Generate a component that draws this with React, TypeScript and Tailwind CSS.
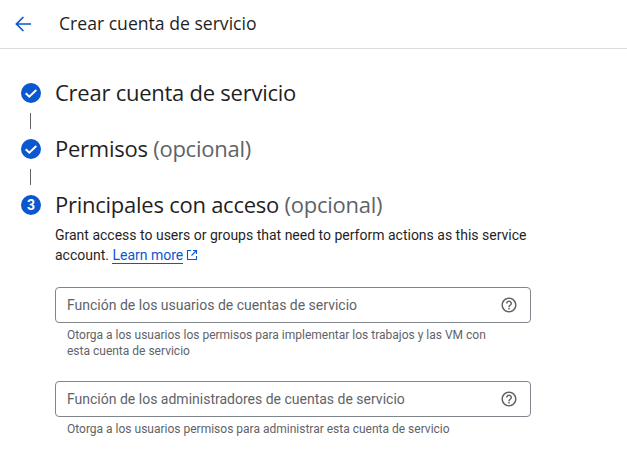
const Check = () => (
  <svg width="20" height="20" viewBox="0 0 20 20" className="block">
    <circle cx="10" cy="10" r="10" fill="#0b57d0" />
    <path d="M4.7 10.2l3.6 3.5 7-6.6" fill="none" stroke="#fff" strokeWidth="2" />
  </svg>
);

const Help = () => (
  <svg width="18" height="18" viewBox="0 0 24 24" fill="#5f6368" className="block">
    <path d="M11 18h2v-2h-2v2zm1-16C6.48 2 2 6.48 2 12s4.48 10 10 10 10-4.48 10-10S17.52 2 12 2zm0 18c-4.41 0-8-3.59-8-8s3.59-8 8-8 8 3.59 8 8-3.59 8-8 8zm0-14c-2.21 0-4 1.79-4 4h2c0-1.1.9-2 2-2s2 .9 2 2c0 2-3 1.75-3 5h2c0-2.25 3-2.5 3-5 0-2.21-1.79-4-4-4z" />
  </svg>
);

const Field = ({ label }: { label: string }) => (
  <div className="flex h-9 w-[476px] items-center justify-between rounded border border-[#80868b] pl-[11px] pr-[12px] text-[14px] text-[#5f6368]">
    <span>{label}</span>
    <Help />
  </div>
);

const Heading = "font-['Open_Sans',sans-serif] pb-[2px] text-[22px] leading-[26px] tracking-[-0.25px] text-[#1f1f1f]";

const Connector = () => <div className="my-[6px] ml-[30px] h-4 w-px bg-[#5f6368]" />;

export default function App() {
  return (
    <div className="h-[450px] w-[627px] overflow-hidden bg-white font-['Roboto',sans-serif]">
      <header className="flex h-[49px] items-center border-b border-[#dadce0] pl-[15px]">
        <svg width="16" height="16" viewBox="0 0 16 16" fill="none" stroke="#0b57d0" strokeWidth="1.7" className="block">
          <path d="M16 8H2M8.4 1 1.4 8l7 7" />
        </svg>
        <span className="ml-[28px] pb-[2px] font-['Open_Sans',sans-serif] text-[17.6px] text-[#1f1f1f]">Crear cuenta de servicio</span>
      </header>

      <main className="pt-[30px]">
        <div className="flex items-center pl-[21px]">
          <Check />
          <h2 className={`ml-[14px] ${Heading}`}>Crear cuenta de servicio</h2>
        </div>
        <Connector />
        <div className="flex items-center pl-[21px]">
          <Check />
          <h2 className={`ml-[14px] ${Heading}`}>
            Permisos <span className="text-[#5f6368]">(opcional)</span>
          </h2>
        </div>
        <Connector />
        <div className="flex items-center pl-[21px]">
          <div className="flex h-5 w-5 items-center justify-center rounded-full bg-[#0b57d0] text-[14px] font-bold text-white">3</div>
          <h2 className={`ml-[14px] ${Heading}`}>
            Principales con acceso <span className="text-[#5f6368]">(opcional)</span>
          </h2>
        </div>

        <div className="pl-[55px] pt-[6px]">
          <p className="w-[490px] text-[14px] leading-5 text-[#1f1f1f]">
            Grant access to users or groups that need to perform actions as this service account.{" "}
            <span className="border-b border-[#0b57d0] text-[#0b57d0]">Learn more</span>
            <svg width="12" height="12" viewBox="0 0 12 12" fill="none" stroke="#0b57d0" strokeWidth="1.1" className="ml-[3px] inline-block align-[-1px]">
              <path d="M5 1.5H1.5v9h9V7M7 1.5h3.5V5M10.5 1.5 5.5 6.5" />
            </svg>
          </p>

          <div className="mt-[22px]">
            <Field label="Función de los usuarios de cuentas de servicio" />
            <p className="mt-1 w-[440px] pl-3 text-[12px] leading-4 text-[#5f6368]">
              Otorga a los usuarios los permisos para implementar los trabajos y las VM con esta cuenta de servicio
            </p>
          </div>
          <div className="mt-[22px]">
            <Field label="Función de los administradores de cuentas de servicio" />
            <p className="mt-1 pl-3 text-[12px] leading-4 text-[#5f6368]">
              Otorga a los usuarios permisos para administrar esta cuenta de servicio
            </p>
          </div>
        </div>
      </main>
    </div>
  );
}
